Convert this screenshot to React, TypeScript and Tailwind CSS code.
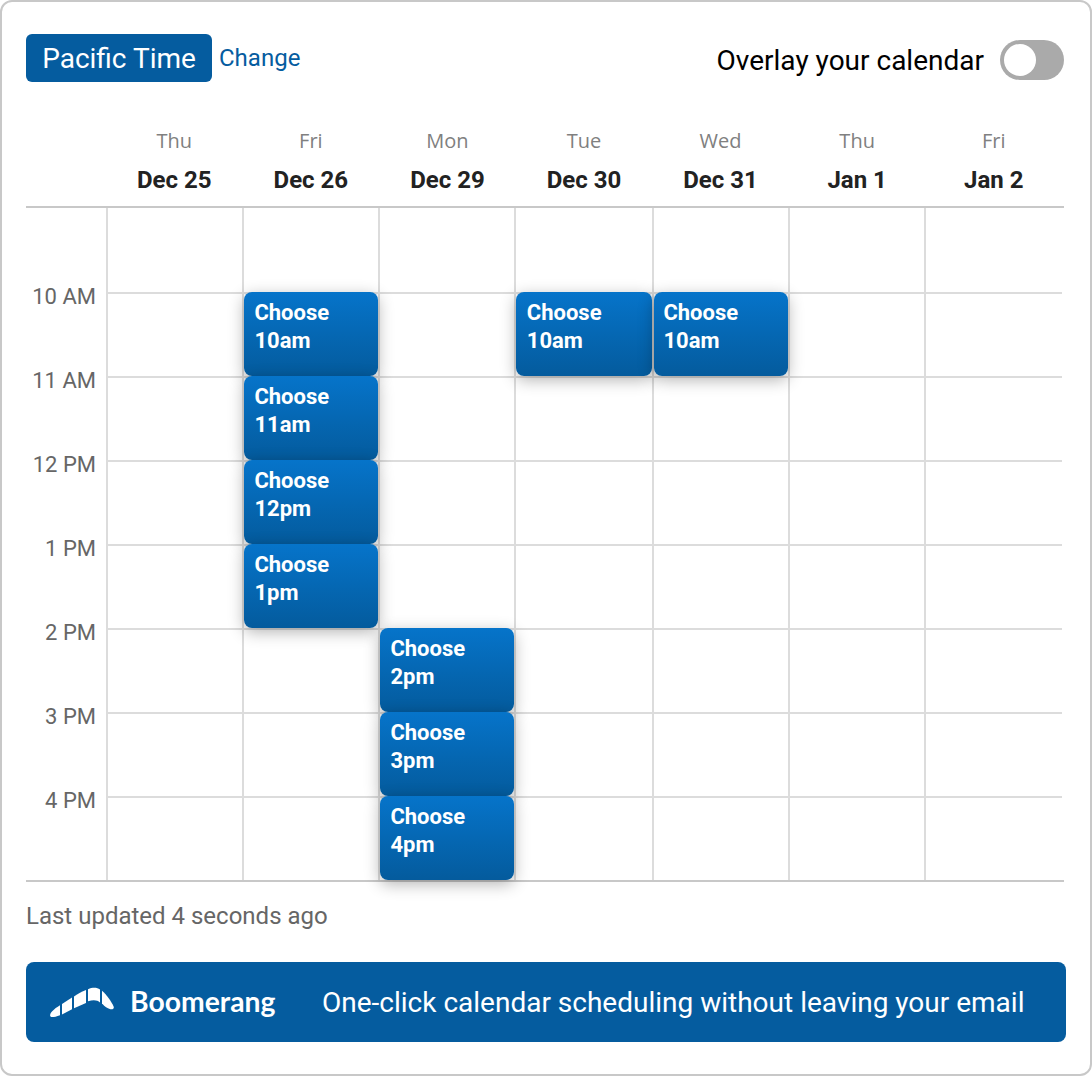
import React from 'react';

interface Day {
  weekday: string;
  date: string;
  slots: string[];
  inset?: string;
}

interface SlotButton {
  time: string;
  inset?: string;
}

const hours = ['10 AM', '11 AM', '12 PM', '1 PM', '2 PM', '3 PM', '4 PM'];

const times = ['', '10am', '11am', '12pm', '1pm', '2pm', '3pm', '4pm'];

const days: Day[] = [
  { weekday: 'Thu', date: 'Dec 25', slots: [] },
  { weekday: 'Fri', date: 'Dec 26', slots: ['10am', '11am', '12pm', '1pm'] },
  { weekday: 'Mon', date: 'Dec 29', slots: ['2pm', '3pm', '4pm'] },
  { weekday: 'Tue', date: 'Dec 30', slots: ['10am'], inset: 'pl-[10.8px]' },
  { weekday: 'Wed', date: 'Dec 31', slots: ['10am'], inset: 'pl-[9.4px]' },
  { weekday: 'Thu', date: 'Jan 1', slots: [] },
  { weekday: 'Fri', date: 'Jan 2', slots: [] },
];

const SlotButton: React.FC<SlotButton> = ({ time, inset = 'pl-[10.4px]' }) => {
  return (
    <button
      type="button"
      className={`relative -mt-0.5 block h-[84px] w-full rounded-lg bg-linear-to-b from-[#0674ca] to-[#045b9d] pt-[7px] text-left text-[22px] font-bold leading-7 text-white shadow-[0_4px_16px_rgba(0,0,0,0.3)] ${inset}`}
    >
      <span className="block h-[77px]">
        Choose
        <br />
        {time}
      </span>
    </button>
  );
};

const BoomerangLogo = () => {
  return (
    <svg
      className="mt-0.5"
      width="64"
      height="32"
      viewBox="0 0 64 32"
      fill="#fff"
    >
      <path d="M10 18.2 L10 28.2 C6 29.6 3 30.4 1.3 30 C-0.8 29.3 0 26.5 2.2 24.2 C4.3 22 7 20 10 18.2Z" />
      <path d="M12 17 L22 10.4 L22 22.2 L12 27.4Z" />
      <path d="M24 9.4 C28 6.8 32 4.6 36 3 L36 16 L24 21.2Z" />
      <path d="M38 2.3 C42.5 0.2 47 0.4 50 2.4 L50 15.4 C47.5 12.8 43 12.6 38 14.2Z" />
      <path d="M52 3.8 C56.5 7.6 61 13.8 63.6 19.6 C64.4 21.8 62.6 22.8 60.4 22.2 C57 21.2 54 18.8 52 16.4Z" />
    </svg>
  );
};

const App: React.FC = () => {
  return (
    <div className="flex h-[1076px] w-[1092px] flex-col rounded-xl border-2 border-[#c8c8c8] bg-white px-6 pt-8 font-[Roboto,sans-serif]">
      <div className="flex h-12 items-center justify-between pr-0.5">
        <div className="flex h-12 items-center gap-2">
          <span className="flex h-12 w-[186px] items-center justify-center rounded-md bg-[#055c9f] pt-0.5 text-[28px] text-white">
            Pacific Time
          </span>
          <a href="#" className="-ml-px text-2xl text-[#055c9f]">
            Change
          </a>
        </div>
        <div className="mt-1 flex items-center gap-4">
          <span className="pt-0.5 text-[28px] text-black">
            Overlay your calendar
          </span>
          <button
            type="button"
            className="flex h-10 w-16 items-center rounded-full bg-[#aaa] px-1"
          >
            <span className="h-8 w-8 rounded-full bg-white" />
          </button>
        </div>
      </div>

      <div className="mr-0.5 mt-[46px] h-20 border-b-2 border-[#c8c8c8] pl-20 pr-0.5">
        <div className="grid grid-cols-7 text-center">
          {days.map((day) => (
            <div key={day.date}>
              <p className="font-['Open_Sans',sans-serif] text-xl leading-[26px] text-[#808080]">
                {day.weekday}
              </p>
              <p className="pt-3 text-2xl font-bold leading-7 text-[#222]">
                {day.date}
              </p>
            </div>
          ))}
        </div>
      </div>

      <div className="mr-0.5 flex h-[674px] border-b-2 border-[#c8c8c8]">
        <div className="h-[672px] w-20 overflow-hidden pr-[10px] pt-[75px] text-right text-[22px] leading-7 text-[#666]">
          {hours.map((hour) => (
            <div key={hour} className="h-[84px] whitespace-nowrap">
              {hour}
            </div>
          ))}
        </div>
        <div className="grid h-[672px] grid-cols-[136px_136px_136px_138px_136px_136px_138px]">
          {days.map((day) => (
            <div key={day.date} className="border-l-2 border-[#dcdcdc]">
              {times.map((time, i) => (
                <div
                  key={time}
                  className={
                    i === 0
                      ? 'h-[84px]'
                      : 'h-[84px] border-t-2 border-[#dcdcdc]'
                  }
                >
                  {day.slots.includes(time) && (
                    <SlotButton time={time} inset={day.inset} />
                  )}
                </div>
              ))}
            </div>
          ))}
        </div>
      </div>

      <p className="mt-[18px] text-2xl leading-8 text-[#666]">
        Last updated 4 seconds ago
      </p>

      <div className="mt-[30px] flex h-20 items-center rounded-lg bg-[#055c9f] pl-6 text-white">
        <BoomerangLogo />
        <span className="-mt-0.5 ml-4 w-48 font-[Lato,sans-serif] text-[28.3px] font-bold">
          Boomerang
        </span>
        <span className="whitespace-nowrap pt-0.5 text-[28px]">
          One-click calendar scheduling without leaving your email
        </span>
      </div>
    </div>
  );
};

export default App;
